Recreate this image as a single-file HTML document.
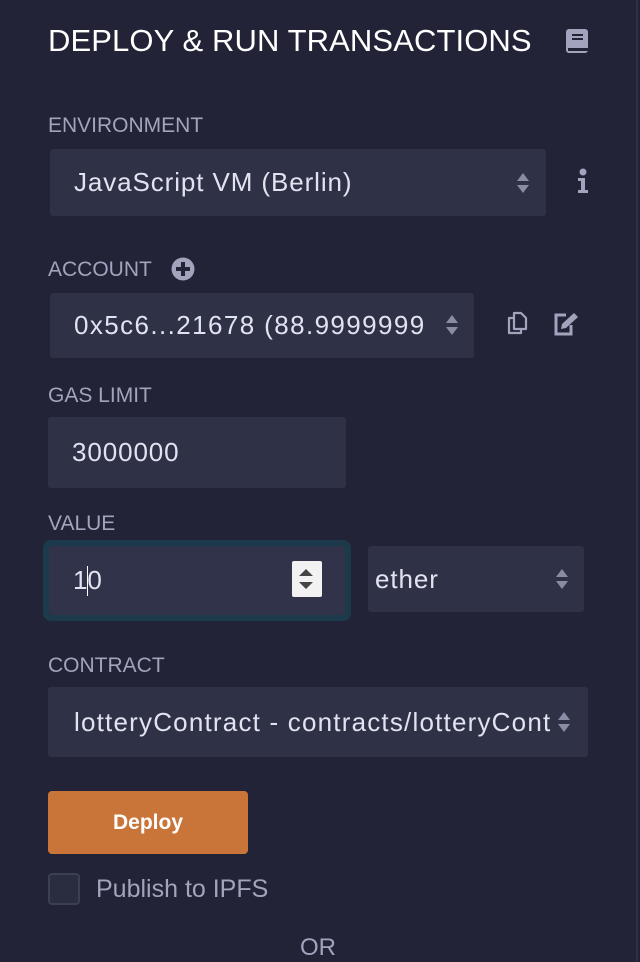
<!DOCTYPE html>
<html><head><meta charset="utf-8"><style>
*{margin:0;padding:0;box-sizing:border-box}
body{width:640px;height:961px;background:#222336;font-family:"Liberation Sans",sans-serif;position:relative;overflow:hidden;color:#e2e3f0}
.a{position:absolute}
.lbl{color:#a2a3bd;font-size:21px}
.box{background:#2f3247;border-radius:3px;font-size:26px;letter-spacing:0.9px;color:#e2e3f0;display:flex;align-items:center}
.arr{position:absolute;width:14px;height:24px}
</style></head><body>
<div class="a" style="left:636px;top:0;width:2px;height:961px;background:#2f3145"></div>
<div class="a" style="left:48px;top:23px;font-size:31px;color:#fff;letter-spacing:0.1px">DEPLOY &amp; RUN TRANSACTIONS</div>
<svg class="a" style="left:565px;top:28px" width="24" height="26" viewBox="0 0 24 26"><rect x="1" y="1" width="22" height="24" rx="3" fill="#a2a3bd"/><rect x="3" y="20" width="20" height="3" fill="#222336"/><rect x="7" y="6" width="11" height="2" fill="#222336"/><rect x="7" y="10" width="11" height="2" fill="#222336"/></svg>

<div class="a lbl" style="left:48px;top:114px">ENVIRONMENT</div>
<div class="a box" style="left:50px;top:149px;width:496px;height:67px;padding-left:24px">JavaScript VM (Berlin)</div>
<svg class="arr" style="left:516px;top:171px" viewBox="0 0 14 24"><path d="M1 10L7 2L13 10Z M1 14L7 22L13 14Z" fill="#8a8ba5"/></svg>
<svg class="a" style="left:577px;top:168px" width="12" height="26" viewBox="0 0 12 26"><circle cx="6" cy="4" r="3.5" fill="#a2a3bd"/><path d="M1 10H8V22H11V25H1V22H4V13H1Z" fill="#a2a3bd"/></svg>

<div class="a lbl" style="left:48px;top:258px">ACCOUNT</div>
<svg class="a" style="left:171px;top:257px" width="24" height="24" viewBox="0 0 24 24"><circle cx="12" cy="12" r="11.5" fill="#a2a3bd"/><path d="M10 5H14V10H19V14H14V19H10V14H5V10H10Z" fill="#222336"/></svg>
<div class="a box" style="left:50px;top:293px;width:424px;height:65px;padding-left:24px;overflow:hidden;white-space:nowrap;letter-spacing:1.4px">0x5c6...21678 (88.9999999</div>
<div class="a" style="left:434px;top:300px;width:40px;height:50px;background:#2f3247"></div>
<svg class="arr" style="left:445px;top:313px" viewBox="0 0 14 24"><path d="M1 10L7 2L13 10Z M1 14L7 22L13 14Z" fill="#8a8ba5"/></svg>
<svg class="a" style="left:505px;top:311px" width="24" height="26" viewBox="0 0 24 26"><path d="M9 2H16L21 7V18H9Z M4 7H9V18H16V22H4Z" fill="none" stroke="#a2a3bd" stroke-width="2.2" stroke-linejoin="round"/></svg>
<svg class="a" style="left:552px;top:311px" width="30" height="26" viewBox="0 0 30 26"><path d="M14 4H4V23H19V14" fill="none" stroke="#a2a3bd" stroke-width="3"/><path d="M9 18L10 13L22 2L26 6L14 17Z" fill="#a2a3bd"/></svg>

<div class="a lbl" style="left:48px;top:384px">GAS LIMIT</div>
<div class="a box" style="left:48px;top:417px;width:298px;height:71px;padding-left:24px">3000000</div>

<div class="a lbl" style="left:48px;top:512px">VALUE</div>
<div class="a" style="left:43px;top:540px;width:308px;height:81px;border-radius:8px;background:#1d3a4d"></div>
<div class="a box" style="left:49px;top:546px;width:296px;height:69px;padding-left:24px;background:#30334a">1<span style="display:inline-block;width:1px;height:30px;background:#fff;margin:0 -1px"></span>0</div>
<div class="a" style="left:292px;top:561px;width:30px;height:36px;background:#f2f2f2;border-radius:2px"></div>
<svg class="a" style="left:296px;top:566px" width="20" height="26" viewBox="0 0 20 26"><path d="M3 10L10 3L17 10Z M3 16L10 23L17 16Z" fill="#444"/></svg>
<div class="a box" style="left:368px;top:546px;width:216px;height:66px;padding-left:7px">ether</div>
<svg class="arr" style="left:555px;top:567px" viewBox="0 0 14 24"><path d="M1 10L7 2L13 10Z M1 14L7 22L13 14Z" fill="#8a8ba5"/></svg>

<div class="a lbl" style="left:48px;top:654px">CONTRACT</div>
<div class="a box" style="left:48px;top:687px;width:540px;height:70px;padding-left:26px;overflow:hidden;white-space:nowrap;letter-spacing:1.2px">lotteryContract - contracts/lotteryCont</div>
<div class="a" style="left:555px;top:700px;width:33px;height:44px;background:#2f3247"></div>
<svg class="arr" style="left:557px;top:710px" viewBox="0 0 14 24"><path d="M1 10L7 2L13 10Z M1 14L7 22L13 14Z" fill="#8a8ba5"/></svg>

<div class="a" style="left:48px;top:791px;width:200px;height:63px;background:#c97539;border-radius:4px;color:#fff;font-size:21px;font-weight:bold;display:flex;align-items:center;justify-content:center">Deploy</div>
<div class="a" style="left:48px;top:873px;width:32px;height:32px;border:2px solid #3b3e54;border-radius:4px;background:#2a2c40"></div>
<div class="a" style="left:96px;top:875px;font-size:25px;color:#a2a3bd">Publish to IPFS</div>
<div class="a" style="left:300px;top:934px;font-size:24px;color:#a2a3bd">OR</div>
</body></html>
